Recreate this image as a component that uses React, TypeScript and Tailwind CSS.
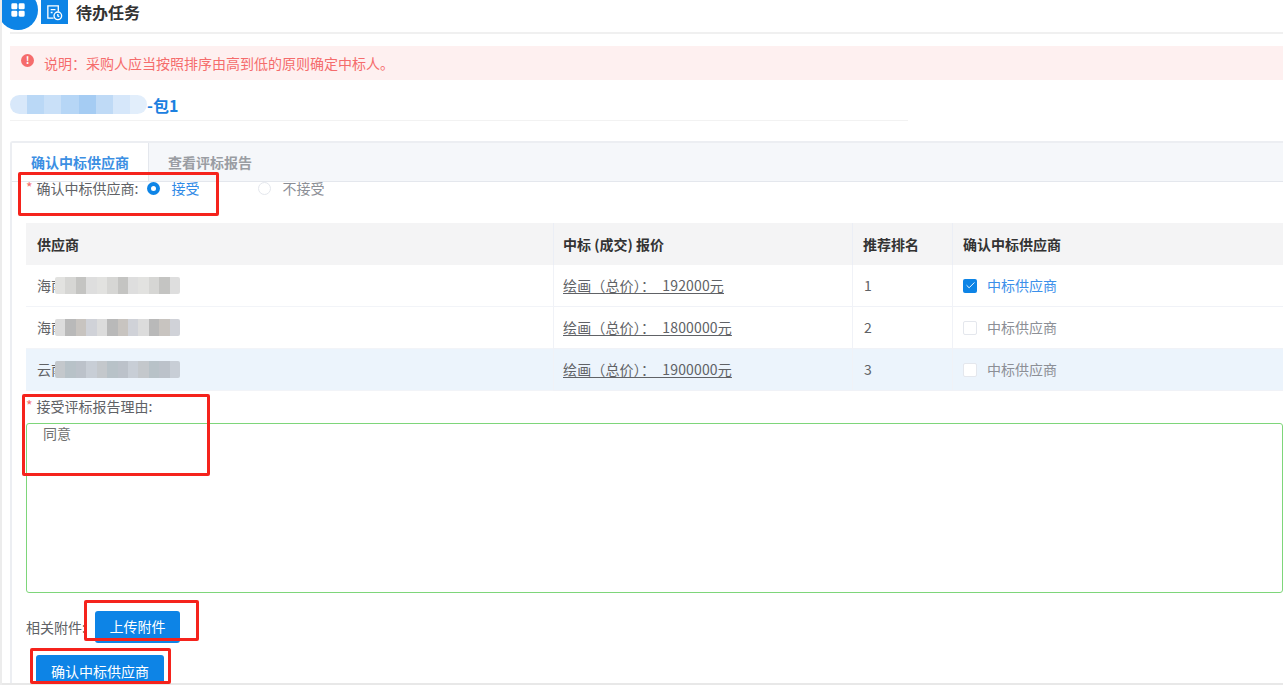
import { Check, LayoutGrid } from "lucide-react";

const rows = [
  { prefix: "海南", price: "绘画（总价）： 192000元", rank: 1, checked: true, tint: false, blur: ["#e2e2e0", "#d6d6d4", "#c4c4c2", "#dedede"] },
  { prefix: "海南", price: "绘画（总价）： 1800000元", rank: 2, checked: false, tint: false, blur: ["#dcdcdc", "#b9b9b9", "#c8c4c0", "#d0d2d8"] },
  { prefix: "云南", price: "绘画（总价）： 1900000元", rank: 3, checked: false, tint: true, blur: ["#c4c8cc", "#b8c2c8", "#bcc2ca", "#c8ced6"] },
];

function RedBox({ className }: { className: string }) {
  return <div className={`pointer-events-none absolute rounded-[2px] border-[3px] border-[#f5231c] ${className}`} />;
}

function Mosaic({ colors }: { colors: string[] }) {
  return (
    <span className="absolute left-[29px] top-[12px] flex h-[17px] w-[125px] overflow-hidden rounded-[2px]">
      {[...colors, ...colors, ...colors].map((c, i) => (
        <span key={i} className="flex-1" style={{ background: c }} />
      ))}
    </span>
  );
}

export default function App() {
  return (
    <div className="relative h-[685px] w-[1283px] overflow-hidden bg-white font-['Noto_Sans_CJK_SC','Liberation_Sans',sans-serif] text-[14px] text-[#606266]">
      {/* header */}
      <header className="ml-[10px] flex h-[34px] items-start border-b-2 border-[#f0f0f0]">
        <div className="-ml-[12px] -mt-[10px] flex h-[40px] w-[40px] shrink-0 items-center justify-center rounded-full bg-[#0d84e6]">
          <LayoutGrid className="h-[16px] w-[16px] fill-white text-white" />
        </div>
        <div className="ml-[3px] flex h-[24px] w-[27px] shrink-0 items-center justify-center bg-[#0d84e6]">
          <svg viewBox="0 0 20 20" className="h-[19px] w-[19px]" fill="none" stroke="white" strokeWidth="1.4">
            <path d="M9 16H3V3h11v6" />
            <path d="M6 7h5M6 10h2" />
            <circle cx="13.5" cy="13.5" r="4" />
            <path d="M13.5 11.5v2l1.5 1" />
          </svg>
        </div>
        <span className="ml-[8px] text-[16px] font-bold leading-[24px] text-[#333]">待办任务</span>
      </header>

      {/* notice */}
      <div className="ml-[10px] mt-[12px] flex h-[34px] items-center bg-[#fef0f0] pl-[11px] text-[14px] text-[#f56c6c]">
        <span className="-mt-[6px] flex h-[13px] w-[13px] items-center justify-center rounded-full bg-[#f56c6c] text-[10px] font-bold leading-none text-white">!</span>
        <span className="ml-[10px]">说明：采购人应当按照排序由高到低的原则确定中标人。</span>
      </div>

      {/* package title */}
      <div className="ml-[10px] mt-[13px] flex h-[28px] w-[898px] items-center border-b border-[#f2f2f2] pb-[4px]">
        <span className="flex h-[19px] w-[137px] overflow-hidden rounded-full opacity-80">
          {["#cfe3f9", "#a9cff5", "#bcd9f7", "#a4ccf4", "#8fc0f1", "#b0d2f5", "#cde2f9", "#dcebfb"].map((c) => (
            <span key={c} className="flex-1" style={{ background: c }} />
          ))}
        </span>
        <span className="text-[16px] font-bold text-[#1b80e0]">-包1</span>
      </div>

      {/* tabs card */}
      <section className="ml-[10px] mt-[20px] rounded-tl-[3px] border-l-2 border-t-2 border-[#eceef2]">
        <div className="flex h-[39px] border-b border-[#e4e7ed] bg-[#f5f7fa]">
          <div className="flex w-[137px] items-center justify-center border-r border-[#e4e7ed] bg-white text-[14px] font-bold text-[#3c8fe3]">确认中标供应商</div>
          <div className="flex w-[122px] items-center justify-center text-[14px] font-bold text-[#9a9da3]">查看评标报告</div>
        </div>

        <div className="pl-[14px]">
          {/* radios */}
          <div className="flex h-[13px] items-center">
            <span className="mr-[4px] mt-[-2px] text-[#f56c6c]">*</span>
            <span className="text-[#606266]">确认中标供应商:</span>
            <span className="ml-[9px] -mt-[1px] flex h-[13px] w-[13px] items-center justify-center rounded-full bg-[#0d84e6]">
              <span className="h-[5px] w-[5px] rounded-full bg-white" />
            </span>
            <span className="ml-[11px] text-[#2f8ae6]">接受</span>
            <span className="ml-[59px] -mt-[1px] h-[13px] w-[13px] rounded-full border border-[#e4e7ed]" />
            <span className="ml-[11px] text-[#8c8f96]">不接受</span>
          </div>

          {/* table */}
          <div className="mt-[28px] grid grid-cols-[527px_299px_100px_331px]">
            <div className="flex h-[42px] items-center bg-[#f4f4f5] pl-[11px] font-bold text-[#333]">供应商</div>
            <div className="flex h-[42px] items-center border-l border-[#ebeef5] bg-[#f4f4f5] pl-[9px] font-bold text-[#333]">中标 (成交) 报价</div>
            <div className="flex h-[42px] items-center border-l border-[#ebeef5] bg-[#f4f4f5] pl-[10px] font-bold text-[#333]">推荐排名</div>
            <div className="flex h-[42px] items-center border-l border-[#ebeef5] bg-[#f4f4f5] pl-[10px] font-bold text-[#333]">确认中标供应商</div>
            {rows.map((row) => {
              const bg = row.tint ? "bg-[#ecf4fc]" : "bg-white";
              return (
                <div key={row.rank} className="contents">
                  <div className={`relative flex h-[42px] items-center border-b border-[#f2f4f8] pl-[11px] ${bg}`}>
                    {row.prefix}
                    <Mosaic colors={row.blur} />
                  </div>
                  <div className={`flex h-[42px] items-center border-b border-l border-[#f0f2f7] pl-[9px] ${bg}`}>
                    <span className="tracking-[0.15px] underline underline-offset-2 [word-spacing:4px]">{row.price}</span>
                  </div>
                  <div className={`flex h-[42px] items-center border-b border-l border-[#f0f2f7] pl-[11px] ${bg}`}>{row.rank}</div>
                  <div className={`flex h-[42px] items-center border-b border-l border-[#f0f2f7] pl-[10px] ${bg}`}>
                    {row.checked ? (
                      <span className="flex h-[14px] w-[14px] items-center justify-center rounded-[2px] bg-[#0d84e6]">
                        <Check className="h-[11px] w-[11px] text-white" strokeWidth={2} />
                      </span>
                    ) : (
                      <span className="h-[14px] w-[14px] rounded-[2px] border border-[#e4e7ed] bg-white" />
                    )}
                    <span className={`ml-[10px] ${row.checked ? "text-[#3c90ea]" : "text-[#8c8f96]"}`}>中标供应商</span>
                  </div>
                </div>
              );
            })}
          </div>

          {/* reason */}
          <div className="flex h-[32px] items-center pb-[1px]">
            <span className="mt-[-2px] mr-[4px] text-[#f56c6c]">*</span>
            <span>接受评标报告理由:</span>
          </div>
          <div className="h-[170px] rounded-[3px] border border-[#7ed67a] px-[16px] text-[14px] leading-[18px] text-[#707070]">同意</div>

          {/* attachments */}
          <div className="mt-[18px] flex h-[32px] items-center">
            <span>相关附件:</span>
            <span className="ml-[9px] flex h-[32px] w-[85px] items-center justify-center rounded-[3px] bg-[#0d84e6] pb-[1px] text-white">上传附件</span>
          </div>
          <div className="ml-[10px] mt-[12px] flex h-[30px] w-[128px] items-center justify-center rounded-t-[3px] bg-[#0d84e6] pt-[2px] text-white">确认中标供应商</div>
        </div>
      </section>

      <div className="absolute bottom-0 left-0 h-[2px] w-full bg-[#e8e8e8]" />
      <div className="absolute left-0 top-0 h-full w-[2px] bg-[#ececec]" />

      {/* red annotation boxes */}
      <RedBox className="left-[18px] top-[172px] h-[44px] w-[201px]" />
      <RedBox className="left-[22px] top-[394px] h-[82px] w-[188px]" />
      <RedBox className="left-[84px] top-[600px] h-[41px] w-[115px]" />
      <RedBox className="left-[30px] top-[648px] h-[36px] w-[141px]" />
    </div>
  );
}
